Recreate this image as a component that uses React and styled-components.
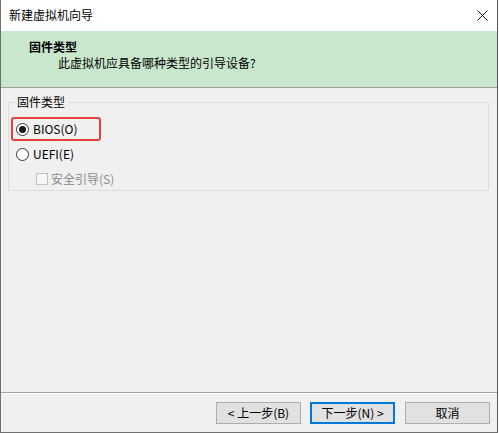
import styled, { createGlobalStyle } from "styled-components";

const GlobalStyle = createGlobalStyle`
  html, body {
    margin: 0;
    padding: 0;
    background: #ffffff;
  }
  * {
    box-sizing: border-box;
  }
`;

const FONT = `"Noto Sans CJK SC", "Noto Sans", sans-serif`;

const App = () => {
  return (
    <>
      <GlobalStyle />
      <S.Window>
        <S.TitleBar>
          <S.TitleText>新建虚拟机向导</S.TitleText>
          <S.CloseButton>
            <svg width="11" height="11" viewBox="0 0 11 11">
              <path d="M0.5 0.5 L10.5 10.5 M10.5 0.5 L0.5 10.5" stroke="#111" strokeWidth="1" />
            </svg>
          </S.CloseButton>
        </S.TitleBar>
        <S.Header>
          <S.HeaderTitle>固件类型</S.HeaderTitle>
          <S.HeaderSub>此虚拟机应具备哪种类型的引导设备?</S.HeaderSub>
        </S.Header>
        <S.Body>
          <S.GroupBox>
            <S.Legend>固件类型</S.Legend>
            <S.Option $highlight>
              <S.Radio $checked />
              <span>BIOS(O)</span>
            </S.Option>
            <S.Option>
              <S.Radio />
              <span>UEFI(E)</span>
            </S.Option>
            <S.CheckRow>
              <S.CheckBox />
              <span>安全引导(S)</span>
            </S.CheckRow>
          </S.GroupBox>
        </S.Body>
        <S.Footer>
          <S.Button>&lt; 上一步(B)</S.Button>
          <S.Button $primary>下一步(N) &gt;</S.Button>
          <S.Button $last>取消</S.Button>
        </S.Footer>
      </S.Window>
    </>
  );
};

const S = {
  Window: styled.div`
    width: 498px;
    height: 433px;
    display: flex;
    flex-direction: column;
    border-left: 1px solid #707070;
    border-right: 1px solid #5a5a5a;
    border-bottom: 1px solid #707070;
    font-family: ${FONT};
    font-size: 12px;
    color: #000;
  `,
  TitleBar: styled.div`
    height: 31px;
    display: flex;
    align-items: center;
    justify-content: space-between;
    padding: 0 9px 1px 8px;
    background: #ffffff;
  `,
  TitleText: styled.div`
    line-height: 16px;
  `,
  CloseButton: styled.div`
    width: 11px;
    height: 11px;
    display: flex;
    margin-top: 1px;
  `,
  Header: styled.div`
    height: 57px;
    background: #c9e7cd;
    border-bottom: 1px solid #a0a0a0;
    padding: 8px 0 0 28px;
  `,
  HeaderTitle: styled.div`
    font-weight: bold;
    line-height: 16px;
  `,
  HeaderSub: styled.div`
    line-height: 16px;
    margin-left: 29px;
  `,
  Body: styled.div`
    flex: 1;
    background: #f0f0f0;
    padding: 6px 8px 0 7px;
  `,
  GroupBox: styled.fieldset`
    margin: 0;
    border: 1px solid #dcdcdc;
    padding: 6px 0 0 2px;
    height: 97px;
  `,
  Legend: styled.legend`
    padding: 0 2px;
    margin-left: 4px;
    line-height: 16px;
  `,
  Option: styled.label`
    width: 90px;
    height: 24px;
    display: flex;
    align-items: center;
    gap: 4px;
    padding-left: 3px;
    margin-top: 1px;
    border: 2px solid ${(p) => (p.$highlight ? "#e8403c" : "transparent")};
    border-radius: 3px;
    line-height: 16px;
  `,
  Radio: styled.span`
    width: 13px;
    height: 13px;
    border-radius: 50%;
    border: 1px solid #333;
    background: #fff;
    display: flex;
    align-items: center;
    justify-content: center;
    &::after {
      content: "";
      width: 7px;
      height: 7px;
      border-radius: 50%;
      background: ${(p) => (p.$checked ? "#1a1a1a" : "transparent")};
    }
  `,
  CheckRow: styled.div`
    height: 22px;
    margin-top: 2px;
    padding-left: 25px;
    display: flex;
    align-items: center;
    gap: 3px;
    color: #8a8a8a;
    line-height: 16px;
  `,
  CheckBox: styled.span`
    width: 12px;
    height: 12px;
    border: 1px solid #c2c2c2;
    background: #f7f7f7;
  `,
  Footer: styled.div`
    height: 40px;
    border-top: 1px solid #a0a0a0;
    box-shadow: inset 0 1px 0 #ffffff;
    background: #f0f0f0;
    display: flex;
    justify-content: flex-end;
    align-items: flex-start;
    gap: 9px;
    padding: 9px 7px 0 0;
  `,
  Button: styled.div`
    width: 85px;
    height: 22px;
    display: flex;
    align-items: center;
    justify-content: center;
    background: #e1e1e1;
    border: ${(p) => (p.$primary ? "2px solid #0078d7" : "1px solid #adadad")};
    line-height: 16px;
    margin-left: ${(p) => (p.$last ? "1px" : "0")};
  `,
};

export default App;
